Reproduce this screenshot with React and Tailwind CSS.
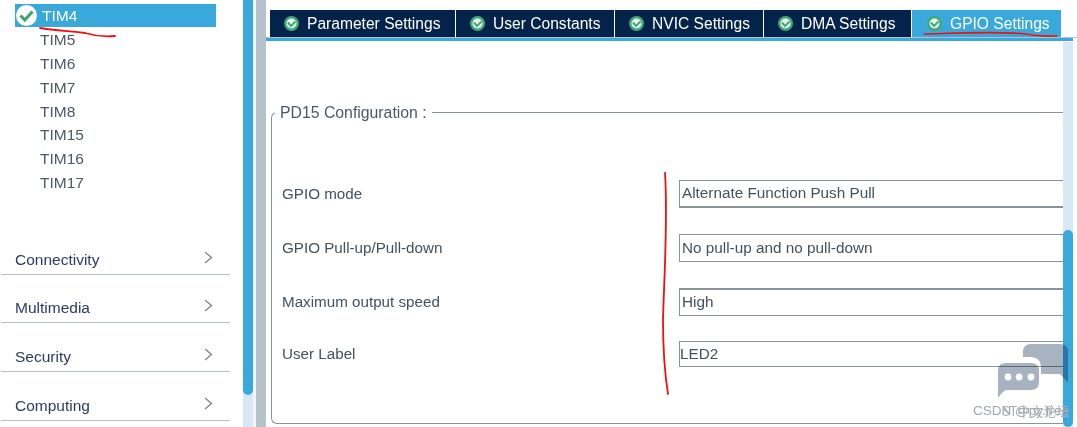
const font = { fontFamily: '"Liberation Sans", Arial, sans-serif' };

function SideCheck() {
  return (
    <svg width="21" height="21" viewBox="0 0 21 21" className="shrink-0">
      <circle cx="10.5" cy="10.5" r="10.5" fill="#ffffff" />
      <path d="M4.5 10.5 L8.8 15 L16.5 6.5" fill="none" stroke="#3fa66a" strokeWidth="3.2" />
    </svg>
  );
}

function TabCheck() {
  return (
    <svg width="15" height="15" viewBox="0 0 15 15" className="shrink-0">
      <circle cx="7.5" cy="7.5" r="7.5" fill="#43a875" />
      <circle cx="7.5" cy="7.5" r="5" fill="#e8f5ee" />
      <path d="M4 6.5 L7 10 L11.5 5.5" fill="none" stroke="#43a875" strokeWidth="2" />
    </svg>
  );
}

function Tab({ label, w, active }) {
  return (
    <div
      className={`${w} h-[27px] flex items-center gap-[8px] text-[15.6px] text-white shrink-0 ${active ? 'bg-[#39a9dc] pl-[15px]' : 'bg-[#03234b] pl-[14px]'}`}
    >
      <TabCheck />
      <span>{label}</span>
    </div>
  );
}

function Group({ label, h }) {
  return (
    <div className={`${h} flex items-end justify-between border-b border-[#b5c0c7] pb-[4px] pl-[14px] pr-[17px]`}>
      <span className="text-[15.5px] leading-[20px] text-[#2b3a67]">{label}</span>
      <svg width="9" height="13" viewBox="0 0 9 13" className="mb-[6px]">
        <path d="M1 1 L7.5 6.5 L1 12" fill="none" stroke="#808890" strokeWidth="1.4" />
      </svg>
    </div>
  );
}

function Row({ label, value, h, inH, bw, pad }) {
  return (
    <div className={`${h} flex items-start`}>
      <div className={`w-[407px] ${inH} flex items-center pl-[10px] text-[15.2px] text-[#44515e]`}>{label}</div>
      <div className={`flex-1 ${inH} ${bw} border-[#8a929a] border-r-0 flex items-center ${pad} text-[15.3px] text-[#44515e]`}>
        {value}
      </div>
    </div>
  );
}

export default function App() {
  const tims = ['TIM5', 'TIM6', 'TIM7', 'TIM8', 'TIM15', 'TIM16', 'TIM17'];
  return (
    <div className="relative w-[1077px] h-[427px] overflow-hidden bg-white flex" style={font}>
      {/* sidebar */}
      <div className="w-[243px] shrink-0 pt-[4px] pl-[1px]">
        <div className="ml-[14px] w-[201px] h-[23px] bg-[#39a9dc] flex items-center pl-[1px] gap-[5px] text-white text-[15.5px]">
          <SideCheck />
          <span>TIM4</span>
        </div>
        <div className="flex flex-col pl-[39px] pt-[1px]">
          {tims.map((t) => (
            <div key={t} className="h-[23.8px] flex items-center text-[15.5px] text-[#4d5866]">{t}</div>
          ))}
        </div>
        <div className="w-[229px] mt-[28px]">
          <Group label="Connectivity" h="h-[52px]" />
          <Group label="Multimedia" h="h-[48.5px]" />
          <Group label="Security" h="h-[48.5px]" />
          <Group label="Computing" h="h-[49px]" />
        </div>
      </div>

      {/* sidebar scrollbar */}
      <div className="w-[10px] h-full shrink-0 bg-[#d9e8f5]">
        <div className="h-[395px] bg-[#39a9dc] rounded-b-[5px]" />
      </div>
      <div className="w-[3px] shrink-0 bg-[#f2f4f5]" />
      <div className="w-[10px] shrink-0 bg-[#b6c2c9]" />

      {/* main */}
      <div className="flex-1 flex flex-col min-w-0">
        <div className="h-[37px] pt-[11px] pl-[4px] flex gap-[1px] items-end">
          <Tab label="Parameter Settings" w="w-[185px]" />
          <Tab label="User Constants" w="w-[158px]" />
          <Tab label="NVIC Settings" w="w-[148px]" />
          <Tab label="DMA Settings" w="w-[147px]" />
          <Tab label="GPIO Settings" w="w-[149px]" active />
        </div>
        <div className="h-[1px] bg-[#b6c2c9]" />
        <div className="h-[3px] bg-[#39a9dc] mr-[4px]" />
        <div className="flex-1 flex min-h-0">
          <div className="w-[797px] shrink-0 pt-[71px] pl-[5px]">
            <div className="relative h-[312px] border-l border-b border-t border-[#8a929a] rounded-l-[6px] pt-[67px]">
              <div className="absolute -top-[10px] left-[3px] bg-white pl-[5px] pr-[5px] text-[15.8px] leading-[20px] text-[#4d5866]">
                PD15 Configuration :
              </div>
              <Row label="GPIO mode" value="Alternate Function Push Pull" h="h-[54px]" inH="h-[28px]" bw="border border-b-2" pad="pl-[2px]" />
              <Row label="GPIO Pull-up/Pull-down" value="No pull-up and no pull-down" h="h-[54px]" inH="h-[28px]" bw="border" pad="pl-[2px]" />
              <Row label="Maximum output speed" value="High" h="h-[53px]" inH="h-[28px]" bw="border border-t-2" pad="pl-[2px]" />
              <Row label="User Label" value="LED2" h="h-[26px]" inH="h-[26px]" bw="border" pad="pl-[0px]" />
            </div>
          </div>
          <div className="w-[10px] shrink-0 flex flex-col bg-[#d9e8f5] mt-[1px]">
            <div className="h-[188px]" />
            <div className="flex-1 bg-[#39a9dc] rounded-[5px]" />
          </div>
        </div>
      </div>

      {/* hand-drawn red annotations */}
      <svg className="absolute inset-0 pointer-events-none" width="1077" height="427" viewBox="0 0 1077 427">
        <g fill="none" stroke="#f01010" strokeLinecap="round">
          <path d="M40 28 C55 31 75 31 85 33 C95 36 105 37 115 36" strokeWidth="1.8" />
          <path d="M924 34 C960 33 1000 31 1025 34 C1040 37 1050 36 1057 36" strokeWidth="1.6" />
          <path d="M665 173 C668 220 664 280 663 320 C663 350 665 375 668 394" strokeWidth="1.8" />
        </g>
      </svg>

      {/* watermark */}
      <div className="absolute left-[973px] top-[344px] w-[104px] h-[83px] pointer-events-none">
        <svg className="absolute left-0 top-0 mix-blend-multiply" width="104" height="60" viewBox="0 0 104 60">
          <path d="M50 13 V8 Q50 0 58 0 H87 Q95 0 95 8 V38 Q93 37 87 30 H68 V24 Q68 13 57 13 Z" fill="#a7b3c1" />
          <path d="M25 54 V27 Q25 19 33 19 H58 Q66 19 66 27 V38 Q66 46 58 46 H33 Q29 48 25 54 Z" fill="#a7b3c1" />
          <circle cx="35" cy="33" r="3.4" fill="#fff" />
          <circle cx="46" cy="33" r="3.4" fill="#fff" />
          <circle cx="58" cy="33" r="3.4" fill="#fff" />
        </svg>
        <div className="absolute left-0 top-[59px] text-[13.5px] leading-[16px] text-[#a0a6ac] whitespace-nowrap">CSDN @py.free</div>
        <div className="absolute left-[29px] top-[59px] text-[13px] leading-[16px] text-[#a8aeb4] whitespace-nowrap" style={{ fontFamily: '"Noto Sans CJK SC", sans-serif' }}>ST中文论坛</div>
      </div>
    </div>
  );
}
